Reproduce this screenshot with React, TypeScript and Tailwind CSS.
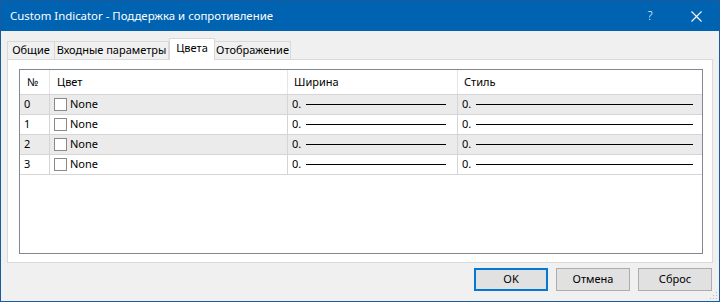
import React from 'react';

const tabs = [
  { label: 'Общие', w: 'w-[48px]' },
  { label: 'Входные параметры', w: 'w-[115px]' },
  { label: 'Цвета', w: 'w-[46px]', active: true },
  { label: 'Отображение', w: 'w-[77px]' },
];

const rows = [0, 1, 2, 3];

function LineCell({ w }: { w: string }) {
  return (
    <div className="flex items-center gap-[5px] pl-[4px]">
      <span>0.</span>
      <div className={`h-px bg-black ${w}`} />
    </div>
  );
}

export default function App() {
  return (
    <div
      className="relative w-[720px] h-[302px] flex flex-col bg-[#f0f0f0] border border-[#1c5aa0] text-[11px] text-black overflow-hidden whitespace-nowrap"
      style={{ fontFamily: '"Noto Sans", "Segoe UI", sans-serif' }}
    >
      {/* Title bar */}
      <div className="h-[30px] shrink-0 bg-[#0063b1] text-white flex items-center pl-[9px]">
        <span className="flex-1 text-[11.4px]">Custom Indicator - Поддержка и сопротивление</span>
        <span className="w-[46px] text-center text-[12px] font-light">?</span>
        <div className="w-[46px] flex justify-center">
          <svg width="11" height="11" viewBox="0 0 11 11">
            <path d="M0.5 0.5 L10.5 10.5 M10.5 0.5 L0.5 10.5" stroke="white" strokeWidth="1.1" />
          </svg>
        </div>
      </div>

      <div className="flex-1 flex flex-col px-[6px]">
        {/* Tabs */}
        <div className="flex items-end h-[21px] mt-[7px] relative z-10">
          {tabs.map((t) =>
            t.active ? (
              <div
                key={t.label}
                className={`${t.w} shrink-0 h-[22px] -mb-px bg-white border border-b-0 border-[#d9d9d9] flex items-center justify-center pb-[3px]`}
              >
                {t.label}
              </div>
            ) : (
              <div
                key={t.label}
                className={`${t.w} shrink-0 h-[18px] bg-[#f0f0f0] border border-b-0 border-[#d9d9d9] -ml-px first:ml-0 flex items-center justify-center`}
              >
                {t.label}
              </div>
            )
          )}
        </div>

        {/* Tab panel */}
        <div className="h-[204px] bg-white border border-[#d9d9d9] pl-[11px] pr-[9px] pt-[9px] pb-[8px]">
          <div className="h-full border border-[#828790] bg-white">
            <div className="grid grid-cols-[30px_238px_170px_1fr] h-[25px] border-b border-[#d5d5d5]">
              <div className="flex items-center pl-[7px] border-r border-[#e5e5e5]">№</div>
              <div className="flex items-center pl-[7px] border-r border-[#e5e5e5]">Цвет</div>
              <div className="flex items-center pl-[6px] border-r border-[#e5e5e5]">Ширина</div>
              <div className="flex items-center pl-[6px]">Стиль</div>
            </div>
            {rows.map((r) => (
              <div
                key={r}
                className={`grid grid-cols-[30px_238px_170px_1fr] h-[20px] border-b border-[#d5d5d5] ${
                  r % 2 === 0 ? 'bg-[#ebebeb]' : 'bg-white'
                }`}
              >
                <div className="flex items-center pl-[4px] border-r border-[#d5d5d5]">{r}</div>
                <div className="flex items-center pl-[4px] gap-[3px] border-r border-[#d5d5d5]">
                  <div className="w-[13px] h-[13px] bg-white border border-[#8a8a8a]" />
                  <span>None</span>
                </div>
                <div className="flex items-center border-r border-[#d5d5d5]">
                  <LineCell w="w-[140px]" />
                </div>
                <div className="flex items-center">
                  <LineCell w="w-[217px]" />
                </div>
              </div>
            ))}
          </div>
        </div>

        {/* Buttons */}
        <div className="flex justify-end gap-[8px] mt-[5px] pr-[1px]">
          <button className="w-[74px] h-[23px] bg-[#e1e1e1] border-2 border-[#0078d7]">OK</button>
          <button className="w-[74px] h-[23px] bg-[#e1e1e1] border border-[#adadad]">Отмена</button>
          <button className="w-[74px] h-[23px] bg-[#e1e1e1] border border-[#adadad]">Сброс</button>
        </div>
      </div>

      {/* Size grip */}
      <svg className="absolute right-[1px] bottom-[1px]" width="10" height="10" viewBox="0 0 10 10">
        {[
          [8, 2],
          [5, 5],
          [8, 5],
          [2, 8],
          [5, 8],
          [8, 8],
        ].map(([x, y]) => (
          <rect key={`${x}-${y}`} x={x} y={y} width="1" height="1" fill="#b8b8b8" />
        ))}
      </svg>
    </div>
  );
}
